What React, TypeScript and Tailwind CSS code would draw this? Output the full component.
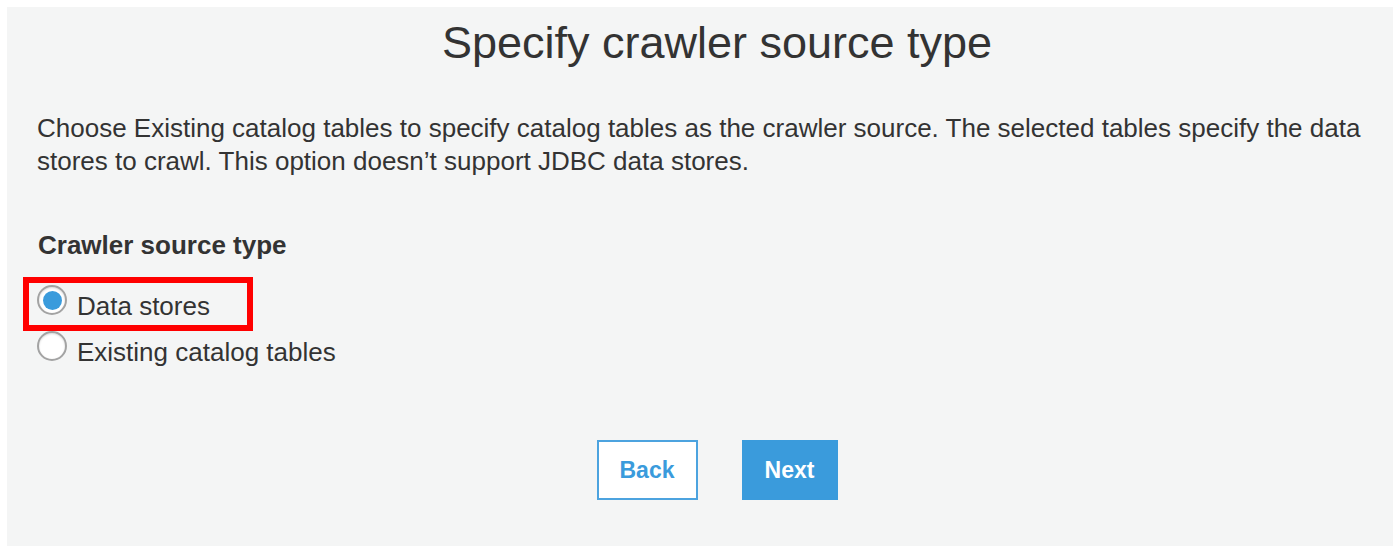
import { useState } from 'react'

function Radio({ checked }: { checked: boolean }) {
  return (
    <span className="w-[30px] h-[30px] rounded-full border-2 border-[#a3a3a3] bg-white flex items-center justify-center shrink-0 shadow-[inset_0_1px_2px_rgba(0,0,0,0.15)]">
      {checked && <span className="w-[19px] h-[19px] rounded-full bg-[#3a9bdc]" />}
    </span>
  )
}

export default function App() {
  const [source, setSource] = useState('data')

  const options = [
    { id: 'data', label: 'Data stores' },
    { id: 'catalog', label: 'Existing catalog tables' },
  ]

  return (
    <div className="bg-white p-[7px] h-[554px] font-['Liberation_Sans',Arial,sans-serif] text-[#333]">
      <div className="bg-[#f4f5f5] h-[539px] pt-[10px] pl-[30px] pr-[20px]">
        {/* Title */}
        <h1 className="ml-[24px] text-center text-[45px] leading-[52px] text-[#333]">
          Specify crawler source type
        </h1>

        {/* Description */}
        <p className="mt-[43px] text-[26px] leading-[33px]">
          Choose Existing catalog tables to specify catalog tables as the crawler source. The selected tables specify the data
          stores to crawl. This option doesn’t support JDBC data stores.
        </p>

        {/* Source type */}
        <div className="mt-[52px] text-[26px] leading-[30px] font-bold pl-[1px]">Crawler source type</div>

        <div className="mt-[25px] flex flex-col">
          {options.map((opt) => (
            <label
              key={opt.id}
              className="relative h-[46px] flex items-start gap-[10px] cursor-pointer"
              onClick={() => setSource(opt.id)}
            >
              <Radio checked={source === opt.id} />
              <span className="mt-[6px] text-[26px] leading-[30px]">{opt.label}</span>
              {opt.id === 'data' && (
                <span className="absolute left-[-14px] top-[-8px] w-[230px] h-[54px] border-[6px] border-[#ff0000] pointer-events-none" />
              )}
            </label>
          ))}
        </div>

        {/* Actions */}
        <div className="ml-[24px] mt-[63px] flex justify-center gap-[44px]">
          <button className="w-[101px] h-[60px] border-2 border-[#4ca3df] bg-white text-[#3a9bdc] text-[23px] font-bold">
            Back
          </button>
          <button className="w-[96px] h-[60px] bg-[#3a9bdc] text-white text-[23px] font-bold">
            Next
          </button>
        </div>
      </div>
    </div>
  )
}
